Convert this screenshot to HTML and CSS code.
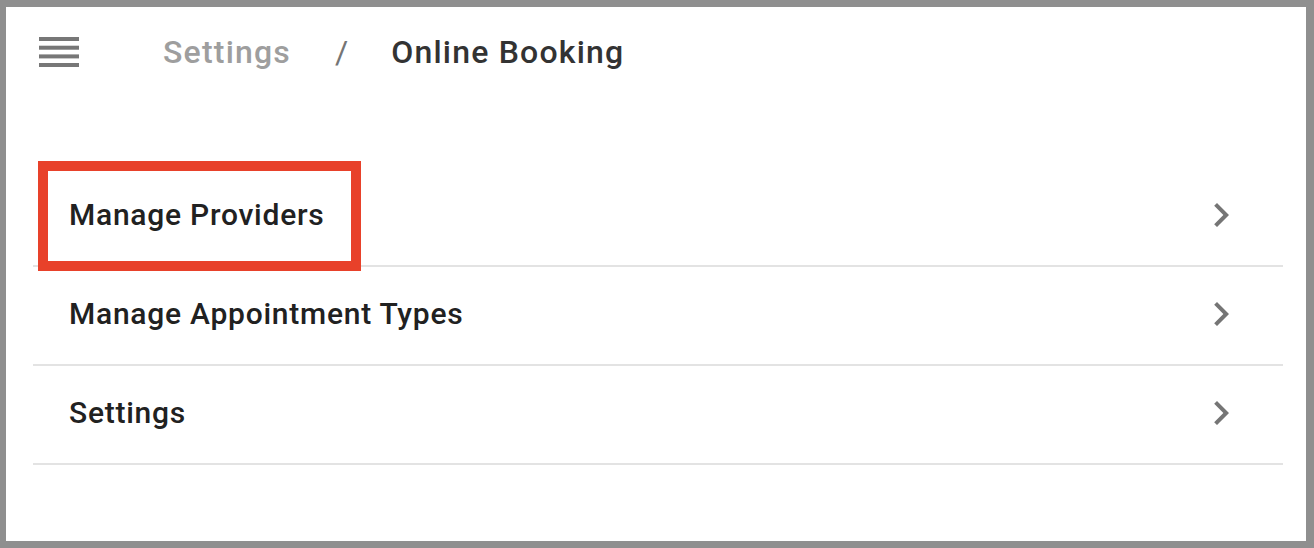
FILE: index.html
```html
<!DOCTYPE html>
<html>
<head>
<meta charset="utf-8">
<link rel="stylesheet" href="styles.css">
</head>
<body>
<div class="frame">
  <header class="topbar">
    <svg class="menu" width="40" height="30" viewBox="0 0 40 30">
      <rect x="0" y="0" width="40" height="4" />
      <rect x="0" y="8.7" width="40" height="4" />
      <rect x="0" y="17.4" width="40" height="4" />
      <rect x="0" y="26" width="40" height="4" />
    </svg>
    <nav class="crumbs">
      <span class="crumb-parent">Settings</span>
      <span class="crumb-sep">/</span>
      <span class="crumb-current">Online Booking</span>
    </nav>
  </header>
  <ul class="menu-list">
    <li class="row">
      <span class="row-label">Manage Providers</span>
      <svg class="chev" width="48" height="48" viewBox="0 0 24 24"><path d="M10 6L8.59 7.41 13.17 12l-4.58 4.59L10 18l6-6z"/></svg>
      <div class="highlight"></div>
    </li>
    <li class="row">
      <span class="row-label">Manage Appointment Types</span>
      <svg class="chev" width="48" height="48" viewBox="0 0 24 24"><path d="M10 6L8.59 7.41 13.17 12l-4.58 4.59L10 18l6-6z"/></svg>
    </li>
    <li class="row">
      <span class="row-label">Settings</span>
      <svg class="chev" width="48" height="48" viewBox="0 0 24 24"><path d="M10 6L8.59 7.41 13.17 12l-4.58 4.59L10 18l6-6z"/></svg>
    </li>
  </ul>
</div>
</body>
</html>
```

FILE: styles.css
```css
* { box-sizing: border-box; }
html, body { margin: 0; padding: 0; background: #fff; }
body { font-family: Roboto, "Liberation Sans", sans-serif; }

.frame {
  height: 548px;
  width: 1314px;
  border-style: solid;
  border-color: #8f8f8f;
  border-width: 7px 8px 7px 6px;
  background: #fff;
}

.topbar {
  height: 90px;
  display: flex;
  align-items: center;
  padding-left: 33px;
}

.menu { fill: #777777; display: block; }

.crumbs {
  display: flex;
  align-items: center;
  margin-left: 84px;
  font-size: 32px;
  font-weight: 500;
  letter-spacing: 1.2px;
}
.crumb-parent { color: #9e9e9e; }
.crumb-sep { color: #757575; margin: 0 43px 0 44px; font-weight: 400; letter-spacing: 0; }
.crumb-current { color: #333333; }

.menu-list {
  list-style: none;
  margin: 71px 23px 0 27px;
  padding: 0;
}

.row {
  position: relative;
  height: 99px;
  border-bottom: 2px solid #e3e3e3;
  display: flex;
  align-items: center;
  justify-content: space-between;
  padding: 0 38px 5px 36px;
}

.row-label {
  font-size: 30px;
  font-weight: 500;
  color: #212121;
  letter-spacing: 0.75px;
}

.chev { fill: #757575; display: block; margin-top: 2px; }

.highlight {
  position: absolute;
  left: 5px;
  top: -7px;
  width: 323px;
  height: 110px;
  border: 10px solid #e8412a;
}
```
